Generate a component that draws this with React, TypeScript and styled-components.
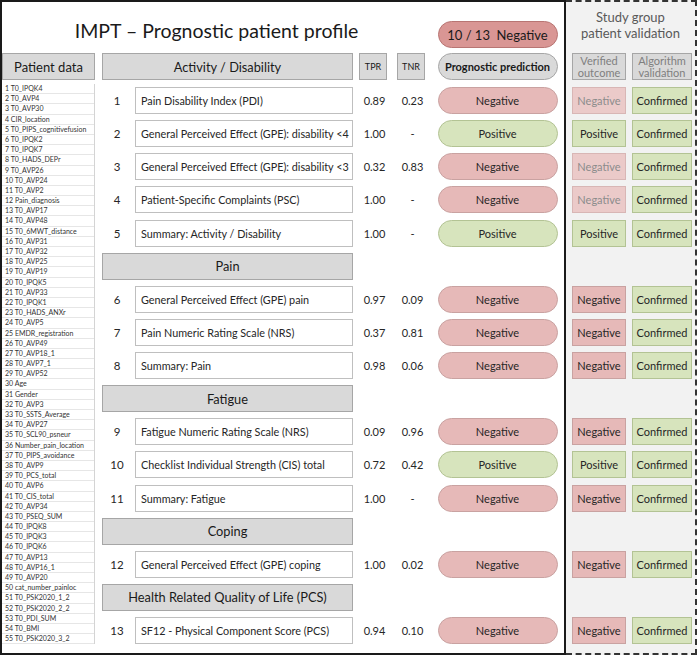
import { Fragment } from 'react';
import styled, { createGlobalStyle } from 'styled-components';

type Tone = 'negative' | 'positive' | 'neutral' | 'summary' | 'faded';

type Item = {
  kind: 'item';
  no: number;
  name: string;
  tpr: string;
  tnr: string;
  prediction: 'Negative' | 'Positive';
  verified: 'Negative' | 'Positive';
  faded?: boolean;
};

type Section = { kind: 'section'; title: string };

const rows: (Item | Section)[] = [
  { kind: 'item', no: 1, name: 'Pain Disability Index (PDI)', tpr: '0.89', tnr: '0.23', prediction: 'Negative', verified: 'Negative', faded: true },
  { kind: 'item', no: 2, name: 'General Perceived Effect (GPE): disability <4', tpr: '1.00', tnr: '-', prediction: 'Positive', verified: 'Positive' },
  { kind: 'item', no: 3, name: 'General Perceived Effect (GPE): disability <3', tpr: '0.32', tnr: '0.83', prediction: 'Negative', verified: 'Negative', faded: true },
  { kind: 'item', no: 4, name: 'Patient-Specific Complaints (PSC)', tpr: '1.00', tnr: '-', prediction: 'Negative', verified: 'Negative', faded: true },
  { kind: 'item', no: 5, name: 'Summary: Activity / Disability', tpr: '1.00', tnr: '-', prediction: 'Positive', verified: 'Positive' },
  { kind: 'section', title: 'Pain' },
  { kind: 'item', no: 6, name: 'General Perceived Effect (GPE) pain', tpr: '0.97', tnr: '0.09', prediction: 'Negative', verified: 'Negative' },
  { kind: 'item', no: 7, name: 'Pain Numeric Rating Scale (NRS)', tpr: '0.37', tnr: '0.81', prediction: 'Negative', verified: 'Negative' },
  { kind: 'item', no: 8, name: 'Summary: Pain', tpr: '0.98', tnr: '0.06', prediction: 'Negative', verified: 'Negative' },
  { kind: 'section', title: 'Fatigue' },
  { kind: 'item', no: 9, name: 'Fatigue Numeric Rating Scale (NRS)', tpr: '0.09', tnr: '0.96', prediction: 'Negative', verified: 'Negative' },
  { kind: 'item', no: 10, name: 'Checklist Individual Strength (CIS) total', tpr: '0.72', tnr: '0.42', prediction: 'Positive', verified: 'Positive' },
  { kind: 'item', no: 11, name: 'Summary: Fatigue', tpr: '1.00', tnr: '-', prediction: 'Negative', verified: 'Negative' },
  { kind: 'section', title: 'Coping' },
  { kind: 'item', no: 12, name: 'General Perceived Effect (GPE) coping', tpr: '1.00', tnr: '0.02', prediction: 'Negative', verified: 'Negative' },
  { kind: 'section', title: 'Health Related Quality of Life (PCS)' },
  { kind: 'item', no: 13, name: 'SF12 - Physical Component Score (PCS)', tpr: '0.94', tnr: '0.10', prediction: 'Negative', verified: 'Negative' },
];

const patientData = [
  'T0_IPQK4', 'T0_AVP4', 'T0_AVP30', 'CIR_location', 'T0_PIPS_cognitivefusion', 'T0_IPQK2', 'T0_IPQK7',
  'T0_HADS_DEPr', 'T0_AVP26', 'T0_AVP24', 'T0_AVP2', 'Pain_diagnosis', 'T0_AVP17', 'T0_AVP48',
  'T0_6MWT_distance', 'T0_AVP31', 'T0_AVP32', 'T0_AVP25', 'T0_AVP19', 'T0_IPQK5', 'T0_AVP33', 'T0_IPQK1',
  'T0_HADS_ANXr', 'T0_AVP5', 'EMDR_registration', 'T0_AVP49', 'T0_AVP18_1', 'T0_AVP7_1', 'T0_AVP52', 'Age',
  'Gender', 'T0_AVP3', 'T0_SSTS_Average', 'T0_AVP27', 'T0_SCL90_psneur', 'Number_pain_location',
  'T0_PIPS_avoidance', 'T0_AVP9', 'T0_PCS_total', 'T0_AVP6', 'T0_CIS_total', 'T0_AVP34', 'T0_PSEQ_SUM',
  'T0_IPQK8', 'T0_IPQK3', 'T0_IPQK6', 'T0_AVP13', 'T0_AVP16_1', 'T0_AVP20', 'cat_number_painloc',
  'T0_PSK2020_1_2', 'T0_PSK2020_2_2', 'T0_PDI_SUM', 'T0_BMI', 'T0_PSK2020_3_2',
];

const tones: Record<Tone, { bg: string; border: string; color: string }> = {
  negative: { bg: '#e6b9b8', border: '#c9a2a1', color: '#262626' },
  faded: { bg: '#ebcac9', border: '#d8b6b5', color: '#8c8c8c' },
  positive: { bg: '#d7e4bd', border: '#b3c394', color: '#262626' },
  neutral: { bg: '#d9d9d9', border: '#a6a6a6', color: '#1a1a1a' },
  summary: { bg: '#d99694', border: '#b87573', color: '#1a1a1a' },
};

const GlobalStyle = createGlobalStyle`
  html, body {
    margin: 0;
    padding: 0;
    background: #ffffff;
  }
  body {
    font-family: Lato, 'Liberation Sans', sans-serif;
    color: #262626;
  }
`;

const Page = styled.div`
  display: flex;
  width: 700px;
  height: 658px;
`;

const Main = styled.div`
  box-sizing: border-box;
  width: 566px;
  height: 655px;
  border: 2px solid #1a1a1a;
  display: flex;
  flex-direction: column;
`;

const TitleRow = styled.div`
  display: flex;
  height: 51px;
  flex-shrink: 0;
`;

const Title = styled.h1`
  margin: 0;
  width: 429px;
  padding-top: 17px;
  text-align: center;
  font-size: 19.5px;
  font-weight: 400;
  line-height: 1.2;
  color: #1a1a1a;
`;

const SummaryCell = styled.div`
  flex: 1;
  display: flex;
  justify-content: center;
  padding-top: 19px;
`;

const Pill = styled.div<{ $tone: Tone; $bold?: boolean; $size?: number }>`
  box-sizing: border-box;
  width: 120px;
  height: 27px;
  border-radius: 14px;
  display: flex;
  align-items: center;
  justify-content: center;
  background: ${(p) => tones[p.$tone].bg};
  border: 1px solid ${(p) => tones[p.$tone].border};
  color: ${(p) => tones[p.$tone].color};
  font-size: ${(p) => p.$size ?? 11}px;
  font-weight: ${(p) => (p.$bold ? 700 : 400)};
  white-space: pre;
`;

const Body = styled.div`
  display: flex;
  flex: 1;
`;

const LeftCol = styled.div`
  width: 93px;
  margin-right: 7px;
  display: flex;
  flex-direction: column;
`;

const GrayBox = styled.div`
  box-sizing: border-box;
  display: flex;
  align-items: center;
  justify-content: center;
  text-align: center;
  background: #d9d9d9;
  border: 1px solid #a6a6a6;
  color: #1a1a1a;
`;

const PatientHeader = styled(GrayBox)`
  height: 27px;
  font-size: 13px;
`;

const PatientList = styled.div`
  margin-top: 4px;
  border-right: 1px solid #d4d4d4;
`;

const PatientRow = styled.div`
  box-sizing: border-box;
  height: 10.2px;
  padding-left: 3px;
  border-bottom: 1px solid #e6e6e6;
  font-size: 7px;
  line-height: 9.5px;
  color: #333333;
  white-space: nowrap;
  overflow: hidden;
`;

const Table = styled.div`
  display: flex;
  flex-direction: column;
`;

const HeaderRow = styled.div`
  display: grid;
  grid-template-columns: 253px 36px 40px 133px;
  height: 27px;
  align-items: stretch;
`;

const SectionHeader = styled(GrayBox)`
  width: 251px;
  font-size: 12.8px;
`;

const ColHeader = styled(GrayBox)`
  width: 28px;
  justify-self: center;
  font-size: 9px;
`;

const PillCell = styled.div`
  display: flex;
  justify-content: center;
  align-items: center;
`;

const ItemGrid = styled.div`
  display: grid;
  grid-template-columns: 28px 225px 36px 40px 133px;
  grid-auto-rows: 27px;
  row-gap: 6.125px;
  margin-top: 7px;
`;

const GridSection = styled(SectionHeader)`
  grid-column: 1 / -1;
`;

const Num = styled.div`
  display: flex;
  align-items: center;
  justify-content: center;
  padding-left: 2px;
  font-size: 11.5px;
`;

const NameBox = styled.div`
  box-sizing: border-box;
  margin: 0 2px 0 5px;
  padding-left: 5px;
  display: flex;
  align-items: center;
  background: #ffffff;
  border: 1px solid #bfbfbf;
  font-size: 10.8px;
  white-space: nowrap;
`;

const Value = styled.div`
  display: flex;
  align-items: center;
  justify-content: center;
  padding-left: 3px;
  font-size: 11px;
`;

const Side = styled.div`
  box-sizing: border-box;
  width: 131px;
  height: 655px;
  border: 2px dashed #333333;
  border-left: none;
  background: #f2f2f2;
  display: flex;
  flex-direction: column;
`;

const SideTitle = styled.div`
  height: 51px;
  flex-shrink: 0;
  box-sizing: border-box;
  padding-top: 8px;
  text-align: center;
  font-size: 13px;
  line-height: 15.5px;
  color: #595959;
`;

const SideColumns = styled.div`
  display: grid;
  grid-template-columns: 54px 60px;
  column-gap: 6px;
  padding-left: 6px;
`;

const SideHeader = styled(SideColumns)`
  height: 27px;
`;

const SideHeadBox = styled(GrayBox)`
  font-size: 11px;
  line-height: 12px;
  color: #7f7f7f;
`;

const SideGrid = styled(SideColumns)`
  grid-auto-rows: 27px;
  row-gap: 6.125px;
  margin-top: 7px;
`;

const SideBox = styled.div<{ $tone: Tone }>`
  box-sizing: border-box;
  display: flex;
  align-items: center;
  justify-content: center;
  background: ${(p) => tones[p.$tone].bg};
  border: 1px solid ${(p) => tones[p.$tone].border};
  color: ${(p) => tones[p.$tone].color};
  font-size: 11px;
`;

const SideGap = styled.div`
  grid-column: 1 / -1;
`;

const toneOf = (v: 'Negative' | 'Positive'): Tone => (v === 'Negative' ? 'negative' : 'positive');

export default function App() {
  return (
    <>
      <GlobalStyle />
      <Page>
        <Main>
          <TitleRow>
            <Title>IMPT – Prognostic patient profile</Title>
            <SummaryCell>
              <Pill $tone="summary" $size={13}>10 / 13  Negative</Pill>
            </SummaryCell>
          </TitleRow>
          <Body>
            <LeftCol>
              <PatientHeader>Patient data</PatientHeader>
              <PatientList>
                {patientData.map((name, i) => (
                  <PatientRow key={name}>
                    {i + 1} {name}
                  </PatientRow>
                ))}
              </PatientList>
            </LeftCol>
            <Table>
              <HeaderRow>
                <SectionHeader>Activity / Disability</SectionHeader>
                <ColHeader>TPR</ColHeader>
                <ColHeader>TNR</ColHeader>
                <PillCell>
                  <Pill $tone="neutral" $bold $size={11}>Prognostic prediction</Pill>
                </PillCell>
              </HeaderRow>
              <ItemGrid>
                {rows.map((row) =>
                  row.kind === 'section' ? (
                    <GridSection key={row.title}>{row.title}</GridSection>
                  ) : (
                    <Fragment key={row.no}>
                      <Num>{row.no}</Num>
                      <NameBox>{row.name}</NameBox>
                      <Value>{row.tpr}</Value>
                      <Value>{row.tnr}</Value>
                      <PillCell>
                        <Pill $tone={toneOf(row.prediction)}>{row.prediction}</Pill>
                      </PillCell>
                    </Fragment>
                  ),
                )}
              </ItemGrid>
            </Table>
          </Body>
        </Main>
        <Side>
          <SideTitle>
            Study group
            <br />
            patient validation
          </SideTitle>
          <SideHeader>
            <SideHeadBox>
              Verified
              <br />
              outcome
            </SideHeadBox>
            <SideHeadBox>
              Algorithm
              <br />
              validation
            </SideHeadBox>
          </SideHeader>
          <SideGrid>
            {rows.map((row) =>
              row.kind === 'section' ? (
                <SideGap key={row.title} />
              ) : (
                <Fragment key={row.no}>
                  <SideBox $tone={row.faded ? 'faded' : toneOf(row.verified)}>{row.verified}</SideBox>
                  <SideBox $tone="positive">Confirmed</SideBox>
                </Fragment>
              ),
            )}
          </SideGrid>
        </Side>
      </Page>
    </>
  );
}
